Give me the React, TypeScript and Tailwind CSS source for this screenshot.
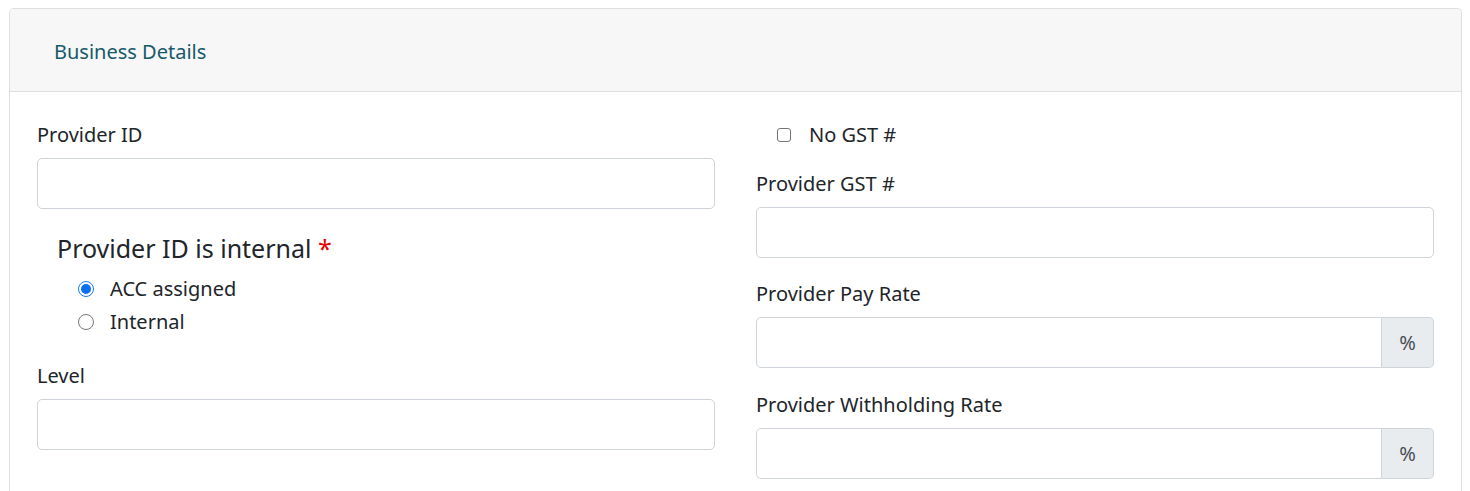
const font = { fontFamily: '"Noto Sans", "Open Sans", sans-serif' };

const TextInput = () => (
  <input
    type="text"
    className="block w-full h-[51px] rounded-[5px] border border-[#ced4da] bg-white px-3 text-[20px] outline-none"
  />
);

const PercentInput = () => (
  <div className="flex w-full h-[51px]">
    <input
      type="text"
      className="flex-1 min-w-0 rounded-l-[5px] border border-[#ced4da] bg-white px-3 text-[20px] outline-none"
    />
    <div className="flex w-[52px] items-center justify-center rounded-r-[5px] border border-l-0 border-[#ced4da] bg-[#e9ecef] text-[20px] text-[#495057]">
      %
    </div>
  </div>
);

const Label = ({ children }: { children: React.ReactNode }) => (
  <label className="block h-[30px] leading-[30px] mb-[8px] text-[20px] text-[#212529]">{children}</label>
);

const Radio = ({ checked, label }: { checked?: boolean; label: string }) => (
  <div className="flex h-[30px] items-center">
    <span
      className={
        checked
          ? 'flex h-[16px] w-[16px] items-center justify-center rounded-full border border-[#1a7cf0] bg-white'
          : 'h-[16px] w-[16px] rounded-full border border-[#767676] bg-white'
      }
    >
      {checked && <span className="h-[10px] w-[10px] rounded-full bg-[#0a6ff0]" />}
    </span>
    <span className="ml-[16px] text-[20px] text-[#212529]">{label}</span>
  </div>
);

export default function App() {
  return (
    <div className="bg-white pt-[8px] pl-[9px] pr-[8px] h-[491px]" style={font}>
      <div className="rounded-t-[5px] border border-b-0 border-[#dfdfdf] h-[483px]">
        {/* Header */}
        <div className="flex h-[83px] items-center border-b border-[#dfdfdf] bg-[#f7f7f7] pl-[44px] pt-[3px] rounded-t-[5px]">
          <span className="text-[20px] text-[#16596a]">Business Details</span>
        </div>

        {/* Body */}
        <div className="flex gap-[41px] pl-[27px] pr-[27px] pt-[28px]">
          {/* Left column */}
          <div className="flex-1">
            <Label>Provider ID</Label>
            <TextInput />

            <div className="mt-[24px] pl-[20px]">
              <div className="h-[30px] leading-[30px] text-[25px] text-[#212529]">
                Provider ID is internal <span className="text-[#e60000]">*</span>
              </div>
              <div className="mt-[11px] pl-[21px] flex flex-col gap-[3px]">
                <Radio checked label="ACC assigned" />
                <Radio label="Internal" />
              </div>
            </div>

            <div className="mt-[24px]">
              <Label>Level</Label>
              <TextInput />
            </div>
          </div>

          {/* Right column */}
          <div className="flex-1">
            <div className="flex h-[30px] items-center pl-[21px]">
              <span className="h-[14px] w-[14px] rounded-[3px] border border-[#767676] bg-white" />
              <span className="ml-[18px] text-[20px] text-[#212529]">No GST #</span>
            </div>

            <div className="mt-[19px]">
              <Label>Provider GST #</Label>
              <TextInput />
            </div>

            <div className="mt-[21px]">
              <Label>Provider Pay Rate</Label>
              <PercentInput />
            </div>

            <div className="mt-[22px]">
              <Label>Provider Withholding Rate</Label>
              <PercentInput />
            </div>
          </div>
        </div>
      </div>
    </div>
  );
}
